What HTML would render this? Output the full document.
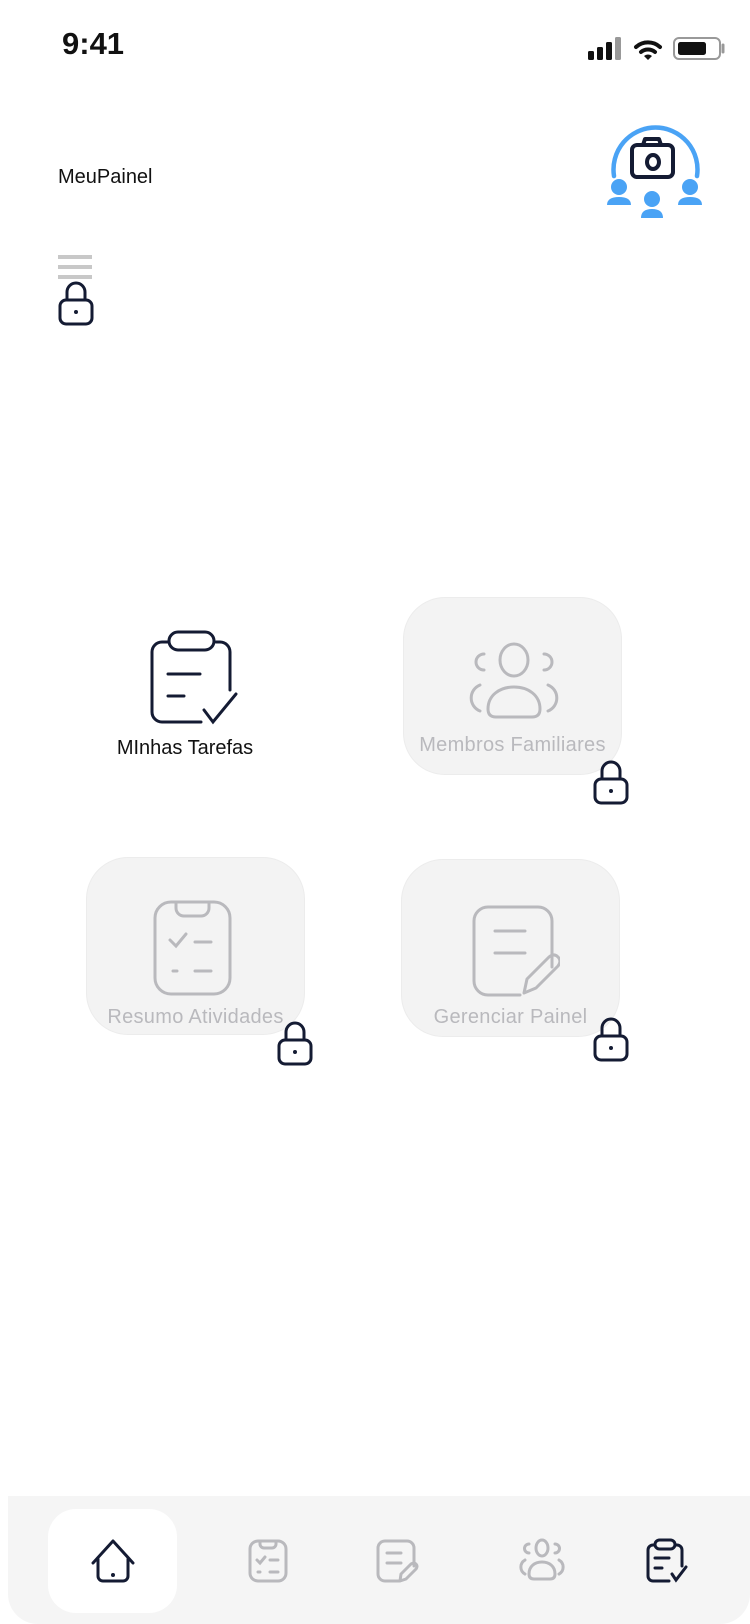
<!DOCTYPE html>
<html><head><meta charset="utf-8"><style>
*{margin:0;padding:0;box-sizing:border-box}
body{width:750px;height:1624px;background:#fff;position:relative;overflow:hidden;font-family:"Comic Sans MS","Liberation Sans",sans-serif}
.a{position:absolute}
.card{position:absolute;background:#f3f3f3;border:1.5px solid #ececec;border-radius:42px}
.lbl{position:absolute;width:100%;text-align:center;font-size:20px;color:#b9b9bd;letter-spacing:0.3px}
</style></head><body>
<div class="a" style="left:62px;top:26px;font:600 31px 'Liberation Sans',sans-serif;color:#111">9:41</div>
<svg class="a" style="left:588px;top:36px" width="140" height="26" viewBox="0 0 140 26">
<rect x="0" y="15" width="6" height="9" rx="1.5" fill="#111"/><rect x="9" y="11" width="6" height="13" rx="1.5" fill="#111"/><rect x="18" y="6" width="6" height="18" rx="1.5" fill="#111"/><rect x="27" y="1" width="6" height="23" rx="1.5" fill="#999"/>
<path d="M48 11a18 18 0 0 1 24 0" stroke="#111" stroke-width="4" fill="none" stroke-linecap="round"/><path d="M53 16a11 11 0 0 1 14 0" stroke="#111" stroke-width="4" fill="none" stroke-linecap="round"/><path d="M56 20l4 4 4-4a6 6 0 0 0-8 0z" fill="#111"/>
<rect x="86" y="2" width="46" height="21" rx="5" fill="none" stroke="#999" stroke-width="2"/><rect x="90" y="6" width="28" height="13" rx="2.5" fill="#111"/><path d="M135 9v7" stroke="#999" stroke-width="3" stroke-linecap="round"/>
</svg>
<div class="a" style="left:58px;top:166px;font-size:20px;color:#111">MeuPainel</div>
<svg class="a" style="left:600px;top:110px" width="110" height="115" viewBox="600 110 110 115">
<path d="M614 176A42 42 0 1 1 697 176" stroke="#4aa3f5" stroke-width="4.5" fill="none" stroke-linecap="round"/>
<rect x="632" y="145" width="41" height="32" rx="5" fill="none" stroke="#141b33" stroke-width="4"/>
<path d="M643 145l2-6h14l2 6" fill="none" stroke="#141b33" stroke-width="4" stroke-linejoin="round"/>
<ellipse cx="653" cy="162" rx="6" ry="7" fill="none" stroke="#141b33" stroke-width="4"/>
<circle cx="619" cy="187" r="8" fill="#4aa3f5"/><path d="M607 205q0-8 12-8t12 8z" fill="#4aa3f5"/>
<circle cx="690" cy="187" r="8" fill="#4aa3f5"/><path d="M678 205q0-8 12-8t12 8z" fill="#4aa3f5"/>
<circle cx="652" cy="199" r="8" fill="#4aa3f5"/><path d="M641 218q0-9 11-9t11 9z" fill="#4aa3f5"/>
</svg>
<svg class="a" style="left:57px;top:254px" width="36" height="26"><path d="M1 3h34M1 13h34M1 23h34" stroke="#c8c8c8" stroke-width="4"/></svg>
<svg class="a lock" style="left:58px;top:281px" width="36" height="45" viewBox="0 0 36 45"><path d="M9 19V11a9 9 0 0 1 18 0v8" fill="none" stroke="#141b33" stroke-width="3"/><rect x="2" y="19" width="32" height="24" rx="6" fill="none" stroke="#141b33" stroke-width="3"/><circle cx="18" cy="31" r="2" fill="#141b33"/></svg>

<svg class="a" style="left:146px;top:630px" width="96" height="98" viewBox="0 0 96 98">
<path d="M55 92H16a10 10 0 0 1-10-10V22a10 10 0 0 1 10-10h6M70 12h4a10 10 0 0 1 10 10v38" fill="none" stroke="#141b33" stroke-width="3" stroke-linecap="round"/>
<rect x="23" y="2" width="45" height="18" rx="9" fill="none" stroke="#141b33" stroke-width="3"/>
<path d="M22 44h32M22 66h16M58 80l9 12 23-28" fill="none" stroke="#141b33" stroke-width="3" stroke-linecap="round"/>
</svg>
<div class="a" style="left:85px;top:737px;width:200px;text-align:center;font-size:20px;color:#111">MInhas Tarefas</div>

<div class="card" style="left:403px;top:597px;width:219px;height:178px">
<svg class="a" style="left:62px;top:44px" width="96" height="80" viewBox="0 0 96 80"><ellipse cx="48" cy="18" rx="14" ry="16" fill="none" stroke="#b9b9bd" stroke-width="3"/><path d="M18 12a7 7 0 0 0 0 16M78 12a7 7 0 0 1 0 16M14 43a14 14 0 0 0 0 26M82 43a14 14 0 0 1 0 26" fill="none" stroke="#b9b9bd" stroke-width="3" stroke-linecap="round"/><path d="M22 67c0-14 12-22 26-22s26 8 26 22q0 8-8 8H30q-8 0-8-8z" fill="none" stroke="#b9b9bd" stroke-width="3"/></svg>
<div class="lbl" style="top:136px">Membros Familiares</div></div>
<svg class="a" style="left:593px;top:760px" width="36" height="45" viewBox="0 0 36 45"><path d="M9 19V11a9 9 0 0 1 18 0v8" fill="none" stroke="#141b33" stroke-width="3"/><rect x="2" y="19" width="32" height="24" rx="6" fill="none" stroke="#141b33" stroke-width="3"/><circle cx="18" cy="31" r="2" fill="#141b33"/></svg>

<div class="card" style="left:86px;top:857px;width:219px;height:178px">
<svg class="a" style="left:66px;top:42px" width="80" height="100" viewBox="0 0 80 100"><rect x="2" y="2" width="75" height="92" rx="16" fill="none" stroke="#b9b9bd" stroke-width="3"/><path d="M23 2v6a8 8 0 0 0 8 8h17a8 8 0 0 0 8-8V2" fill="none" stroke="#b9b9bd" stroke-width="3"/><path d="M17 40l6 6 10-12M42 42h16M20 71h4M42 71h16" fill="none" stroke="#b9b9bd" stroke-width="3" stroke-linecap="round"/></svg>
<div class="lbl" style="top:148px">Resumo Atividades</div></div>
<svg class="a" style="left:277px;top:1021px" width="36" height="45" viewBox="0 0 36 45"><path d="M9 19V11a9 9 0 0 1 18 0v8" fill="none" stroke="#141b33" stroke-width="3"/><rect x="2" y="19" width="32" height="24" rx="6" fill="none" stroke="#141b33" stroke-width="3"/><circle cx="18" cy="31" r="2" fill="#141b33"/></svg>

<div class="card" style="left:401px;top:859px;width:219px;height:178px">
<svg class="a" style="left:68px;top:43px" width="90" height="100" viewBox="0 0 90 100"><path d="M50 92H18A14 14 0 0 1 4 78V18A14 14 0 0 1 18 4h50a14 14 0 0 1 14 14v46" fill="none" stroke="#b9b9bd" stroke-width="3" stroke-linecap="round"/><path d="M25 28h30M25 50h30" stroke="#b9b9bd" stroke-width="3" stroke-linecap="round"/><path d="M54 90l3-14 22-22q5-4 9 0t0 9l-22 22-12 5z" fill="none" stroke="#b9b9bd" stroke-width="3" stroke-linejoin="round"/></svg>
<div class="lbl" style="top:146px">Gerenciar Painel</div></div>
<svg class="a" style="left:593px;top:1017px" width="36" height="45" viewBox="0 0 36 45"><path d="M9 19V11a9 9 0 0 1 18 0v8" fill="none" stroke="#141b33" stroke-width="3"/><rect x="2" y="19" width="32" height="24" rx="6" fill="none" stroke="#141b33" stroke-width="3"/><circle cx="18" cy="31" r="2" fill="#141b33"/></svg>

<div class="a" style="left:8px;top:1496px;width:742px;height:128px;background:#f5f5f5;border-radius:0 0 30px 30px"></div>
<div class="a" style="left:48px;top:1509px;width:129px;height:104px;background:#fff;border-radius:28px"></div>
<svg class="a" style="left:90px;top:1538px" width="46" height="46" viewBox="0 0 46 46"><path d="M3 25L23 3l20 22M8 21v17a5 5 0 0 0 5 5h20a5 5 0 0 0 5-5V21" fill="none" stroke="#141b33" stroke-width="3" stroke-linecap="round" stroke-linejoin="round"/><circle cx="23" cy="37" r="2" fill="#141b33"/></svg>
<svg class="a" style="left:248px;top:1538px" width="40" height="46" viewBox="0 0 40 46"><rect x="2" y="3" width="36" height="40" rx="8" fill="none" stroke="#b9b9bd" stroke-width="3"/><path d="M12 3v3a4 4 0 0 0 4 4h8a4 4 0 0 0 4-4V3M9 22l3 3 5-6M22 22h8M10 34h2M22 34h8" fill="none" stroke="#b9b9bd" stroke-width="3" stroke-linecap="round"/></svg>
<svg class="a" style="left:375px;top:1538px" width="44" height="46" viewBox="0 0 44 46"><path d="M24 43H10a7 7 0 0 1-7-7V10a7 7 0 0 1 7-7h22a7 7 0 0 1 7 7v18M12 15h14M12 25h14" fill="none" stroke="#b9b9bd" stroke-width="3" stroke-linecap="round"/><path d="M25 43l1-7 10-10q3-2 5 0t0 5L31 41z" fill="none" stroke="#b9b9bd" stroke-width="3" stroke-linejoin="round"/></svg>
<svg class="a" style="left:517px;top:1538px" width="50" height="46" viewBox="0 0 50 46"><ellipse cx="25" cy="10" rx="6" ry="8" fill="none" stroke="#b9b9bd" stroke-width="3"/><path d="M12 6a4 4 0 0 0 0 9M38 6a4 4 0 0 1 0 9M8 22a8 8 0 0 0 0 14M42 22a8 8 0 0 1 0 14" fill="none" stroke="#b9b9bd" stroke-width="3" stroke-linecap="round"/><path d="M12 36c0-8 6-12 13-12s13 4 13 12q0 5-5 5H17q-5 0-5-5z" fill="none" stroke="#b9b9bd" stroke-width="3"/></svg>
<svg class="a" style="left:645px;top:1538px" width="46" height="46" viewBox="0 0 46 46"><path d="M24 43H8a5 5 0 0 1-5-5V12a5 5 0 0 1 5-5h2M30 7h2a5 5 0 0 1 5 5v16" fill="none" stroke="#141b33" stroke-width="3" stroke-linecap="round"/><rect x="10" y="2" width="20" height="9" rx="4.5" fill="none" stroke="#141b33" stroke-width="3"/><path d="M10 20h14M10 30h7M27 36l4 6 10-13" fill="none" stroke="#141b33" stroke-width="3" stroke-linecap="round"/></svg>
</body></html>
